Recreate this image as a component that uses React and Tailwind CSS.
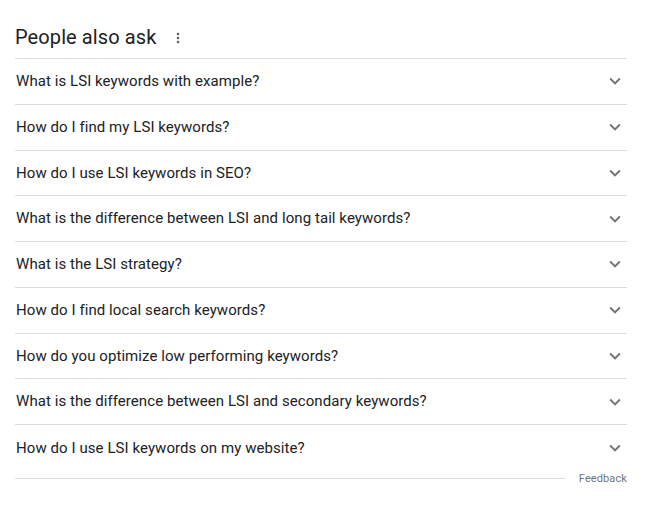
import React from "react";

const questions = [
  "What is LSI keywords with example?",
  "How do I find my LSI keywords?",
  "How do I use LSI keywords in SEO?",
  "What is the difference between LSI and long tail keywords?",
  "What is the LSI strategy?",
  "How do I find local search keywords?",
  "How do you optimize low performing keywords?",
  "What is the difference between LSI and secondary keywords?",
  "How do I use LSI keywords on my website?",
];

function Chevron() {
  return (
    <svg width="22" height="22" viewBox="0 0 24 24" fill="#70757a">
      <path d="M16.59 8.59L12 13.17 7.41 8.59 6 10l6 6 6-6z" />
    </svg>
  );
}

export default function App() {
  return (
    <div
      className="w-[664px] h-[507px] bg-white"
      style={{ fontFamily: "Roboto, Arial, sans-serif" }}
    >
      <div className="ml-[15px] w-[612px]">
        <div className="h-[59px] border-b border-[#dadce0] pt-[23px] flex items-start">
          <span className="text-[20px] leading-[28px] tracking-[0.1px] text-[#202124]">People also ask</span>
          <svg width="16" height="16" viewBox="0 0 24 24" fill="#5f6368" className="ml-[14px] mt-[7px]">
            <path d="M12 8c1.1 0 2-.9 2-2s-.9-2-2-2-2 .9-2 2 .9 2 2 2zm0 2c-1.1 0-2 .9-2 2s.9 2 2 2 2-.9 2-2-.9-2-2-2zm0 6c-1.1 0-2 .9-2 2s.9 2 2 2 2-.9 2-2-.9-2-2-2z" />
          </svg>
        </div>
        {questions.map((q, i) => (
          <div
            key={i}
            className={
              i < questions.length - 1
                ? "h-[45.75px] border-b border-[#dadce0] flex items-center justify-between"
                : "h-[45.75px] flex items-center justify-between"
            }
          >
            <span className="text-[15px] tracking-[0.07px] text-[#202124] pl-[1px]">{q}</span>
            <span className="mr-[1px] flex items-center">
              <Chevron />
            </span>
          </div>
        ))}
        <div className="h-[16px] flex items-center">
          <div className="flex-1 h-px bg-[#dadce0] mt-[-1px]" />
          <span className="ml-[14px] text-[11px] leading-[16px] tracking-[0.1px] text-[#70757a]">Feedback</span>
        </div>
      </div>
    </div>
  );
}
